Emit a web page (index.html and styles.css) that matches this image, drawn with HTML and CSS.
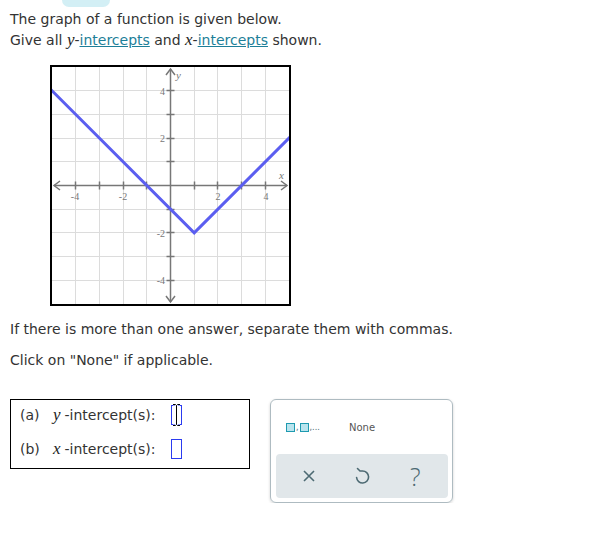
FILE: index.html
```html
<!DOCTYPE html>
<html>
<head>
<meta charset="utf-8">
<link rel="stylesheet" href="styles.css">
</head>
<body>
<div class="page">
  <div class="tab"></div>
  <p class="intro">The graph of a function is given below.<br>Give all <i class="var">y</i>-<a class="link">intercepts</a> and <i class="var">x</i>-<a class="link">intercepts</a> shown.</p>
  <div class="graph">
    <svg width="237" height="237" viewBox="0 0 237 237">
      <g class="grid">
        <line x1="23.5" y1="0" x2="23.5" y2="237"/>
        <line x1="47.5" y1="0" x2="47.5" y2="237"/>
        <line x1="71.5" y1="0" x2="71.5" y2="237"/>
        <line x1="94.5" y1="0" x2="94.5" y2="237"/>
        <line x1="142.5" y1="0" x2="142.5" y2="237"/>
        <line x1="165.5" y1="0" x2="165.5" y2="237"/>
        <line x1="189.5" y1="0" x2="189.5" y2="237"/>
        <line x1="213.5" y1="0" x2="213.5" y2="237"/>
        <line y1="23.5" x1="0" y2="23.5" x2="237"/>
        <line y1="47.5" x1="0" y2="47.5" x2="237"/>
        <line y1="71.5" x1="0" y2="71.5" x2="237"/>
        <line y1="94.5" x1="0" y2="94.5" x2="237"/>
        <line y1="142.5" x1="0" y2="142.5" x2="237"/>
        <line y1="165.5" x1="0" y2="165.5" x2="237"/>
        <line y1="189.5" x1="0" y2="189.5" x2="237"/>
        <line y1="213.5" x1="0" y2="213.5" x2="237"/>
      </g>
      <g class="axis">
        <line x1="2" y1="118.5" x2="235" y2="118.5"/>
        <line x1="118.5" y1="2" x2="118.5" y2="235"/>
        <path d="M8 114 L2 118.5 L8 123"/>
        <path d="M229 114 L235 118.5 L229 123"/>
        <path d="M114 8 L118.5 2 L123 8"/>
        <path d="M114 229 L118.5 235 L123 229"/>
        <path d="M23.5 114.5 V122.5 M47.5 114.5 V122.5 M71.5 114.5 V122.5 M94.5 114.5 V122.5 M142.5 114.5 V122.5 M165.5 114.5 V122.5 M189.5 114.5 V122.5 M213.5 114.5 V122.5"/>
        <path d="M114.5 23.5 H122.5 M114.5 47.5 H122.5 M114.5 71.5 H122.5 M114.5 94.5 H122.5 M114.5 142.5 H122.5 M114.5 165.5 H122.5 M114.5 189.5 H122.5 M114.5 213.5 H122.5"/>
      </g>
      <g class="num">
        <text x="23" y="133">-4</text>
        <text x="71" y="133">-2</text>
        <text x="166" y="133">2</text>
        <text x="214" y="133">4</text>
      </g>
      <g class="num end">
        <text x="113" y="27.5">4</text>
        <text x="113" y="75">2</text>
        <text x="113" y="169.5">-2</text>
        <text x="113" y="217">-4</text>
      </g>
      <text class="axlbl" x="227" y="112">x</text>
      <text class="axlbl" x="124" y="12">y</text>
      <polyline class="fn" points="-1,22.7 142.2,165.9 238,70.1"/>
    </svg>
  </div>
  <p class="note first">If there is more than one answer, separate them with commas.</p>
  <p class="note">Click on "None" if applicable.</p>
  <div class="answer">
    <div class="box">
      <div class="row">
        <span class="lbl">(a)</span>
        <span class="q"><i class="var rv">y</i>-intercept(s):</span>
        <span class="inp">
          <svg class="cursor" width="9" height="24" viewBox="0 0 9 24">
            <path d="M1 1.5 H3.5 L4.5 2.5 L5.5 1.5 H8 M4.5 2.5 V21.5 M1 22.5 H3.5 L4.5 21.5 L5.5 22.5 H8" fill="none" stroke="#fff" stroke-width="2.2"/>
            <path d="M1 1.5 H3.5 L4.5 2.5 L5.5 1.5 H8 M4.5 2.5 V21.5 M1 22.5 H3.5 L4.5 21.5 L5.5 22.5 H8" fill="none" stroke="#000" stroke-width="1"/>
          </svg>
        </span>
      </div>
      <div class="row">
        <span class="lbl">(b)</span>
        <span class="q"><i class="var rv">x</i>-intercept(s):</span>
        <span class="inp"></span>
      </div>
    </div>
    <div class="panel">
      <div class="panel-top">
        <span class="multi"><span class="sq"></span><span class="cm">,</span><span class="sq"></span><span class="cm">,...</span></span>
        <span class="none">None</span>
      </div>
      <div class="bar">
        <span class="btn">
          <svg width="14" height="14" viewBox="0 0 14 14"><path d="M2 2 L12 12 M12 2 L2 12" fill="none" stroke="#4d6a73" stroke-width="1.6"/></svg>
        </span>
        <span class="btn">
          <svg width="16" height="18" viewBox="0 0 16 18"><path d="M3.5 1.5 L6 4 H8.5 A6 6 0 1 1 2.6 10.5" fill="none" stroke="#4d6a73" stroke-width="1.6" stroke-linecap="round" stroke-linejoin="round"/></svg>
        </span>
        <span class="btn q-mark">?</span>
      </div>
    </div>
  </div>
</div>
</body>
</html>
```

FILE: styles.css
```css
html, body {
  margin: 0;
  padding: 0;
  background: #fff;
}
.page {
  padding: 0 10px;
  font-family: "DejaVu Sans", Verdana, sans-serif;
  font-size: 14px;
  color: #333;
}
.tab {
  width: 48px;
  height: 7px;
  margin-left: 52px;
  background: #d3eff5;
  border-radius: 0 0 9px 9px;
}
.intro {
  margin: 2px 0 0 0;
  line-height: 21px;
}
.var {
  font-family: "Liberation Serif", "Times New Roman", serif;
  font-style: italic;
  font-size: 17px;
  line-height: 14px;
  color: #222;
}
.rv {
  margin-right: 4px;
}
.link {
  color: #1d7f99;
  text-decoration: underline;
}
.graph {
  margin: 14px 0 0 40px;
  width: 237px;
  height: 237px;
  border: 2px solid #000;
}
.graph svg {
  display: block;
}
.grid line {
  stroke: #dcdcdc;
  stroke-width: 1;
}
.axis line, .axis path {
  stroke: #777;
  stroke-width: 1.5;
  fill: none;
}
.num text {
  font-family: "Liberation Serif", "Times New Roman", serif;
  font-size: 10px;
  fill: #777;
  text-anchor: middle;
}
.num.end text {
  text-anchor: end;
}
.axlbl {
  font-family: "Liberation Serif", "Times New Roman", serif;
  font-style: italic;
  font-size: 11px;
  fill: #777;
}
.fn {
  fill: none;
  stroke: #5b5ef0;
  stroke-width: 3;
  stroke-linejoin: miter;
}
.note {
  margin: 10px 0 0 0;
  line-height: 21px;
}
.note.first {
  margin-top: 13px;
}
.answer {
  margin-top: 28px;
  display: flex;
  align-items: flex-start;
  gap: 20px;
}
.box {
  width: 220px;
  border: 1px solid #000;
  padding: 5px 9px 9px 9px;
  display: flex;
  flex-direction: column;
  gap: 14px;
}
.row {
  display: flex;
  align-items: center;
  height: 20px;
}
.lbl {
  width: 33px;
}
.q {
  width: 118px;
}
.inp {
  position: relative;
  width: 9px;
  height: 18px;
  border: 1px solid #2b3bf0;
}
.cursor {
  position: absolute;
  left: 0px;
  top: -3px;
}
.panel {
  border: 1px solid #aebbc1;
  border-radius: 6px;
  box-shadow: 0 1px 3px rgba(0,0,0,0.18);
  display: flex;
  flex-direction: column;
  padding: 0 4px 4px 5px;
  box-sizing: border-box;
  width: 183px;
  height: 104px;
}
.panel-top {
  height: 54px;
  display: flex;
  align-items: center;
  padding-left: 10px;
}
.multi {
  display: flex;
  align-items: flex-end;
  width: 63px;
  color: #4a6a74;
  font-size: 8px;
  line-height: 8px;
}
.sq {
  width: 7px;
  height: 7px;
  border: 1.5px solid #1e9ab0;
  background: #b9e4ee;
}
.cm {
  margin: 0 1px;
}
.none {
  font-size: 10px;
  color: #555;
}
.bar {
  flex: 1;
  background: #e1e7ea;
  border-radius: 4px;
  display: flex;
  align-items: center;
  justify-content: space-around;
  padding: 0 6px;
}
.btn {
  width: 30px;
  display: flex;
  justify-content: center;
  align-items: center;
  color: #4d6a73;
}
.q-mark {
  font-family: "Open Sans", "Liberation Sans", sans-serif;
  font-weight: 300;
  font-size: 25px;
  line-height: 24px;
}
```
